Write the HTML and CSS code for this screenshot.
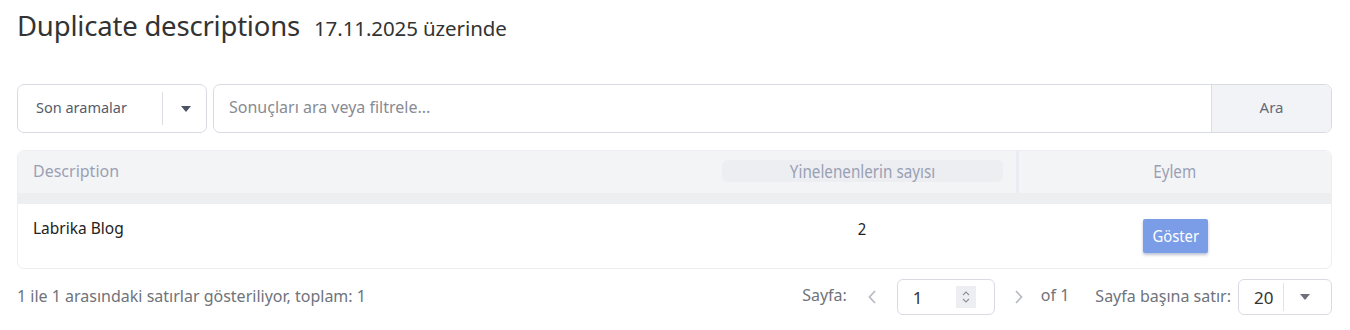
FILE: index.html
```html
<!DOCTYPE html>
<html lang="tr">
<head>
<meta charset="utf-8">
<link rel="stylesheet" href="styles.css">
</head>
<body>
<div class="page">
  <div class="title-row">
    <h1 class="title">Duplicate descriptions</h1>
    <span class="date">17.11.2025 üzerinde</span>
  </div>

  <div class="search-row">
    <div class="recent">
      <span class="recent-label">Son aramalar</span>
      <span class="recent-sep"></span>
      <span class="caret"></span>
    </div>
    <div class="search-box">
      <span class="search-input">Sonuçları ara veya filtrele...</span>
      <span class="search-btn">Ara</span>
    </div>
  </div>

  <div class="table">
    <div class="thead">
      <div class="th th-desc">Description</div>
      <div class="th th-count"><span class="pill"><span class="narrow">Yinelenenlerin sayısı</span></span></div>
      <div class="th th-action"><span class="narrow">Eylem</span></div>
    </div>
    <div class="thead-strip"></div>
    <div class="tr">
      <div class="td td-desc">Labrika Blog</div>
      <div class="td td-count"><span class="narrow">2</span></div>
      <div class="td td-action"><span class="btn-show"><span class="narrow">Göster</span></span></div>
    </div>
  </div>

  <div class="footer">
    <div class="info">1 ile 1 arasındaki satırlar gösteriliyor, toplam: 1</div>
    <div class="pager">
      <span class="pager-label">Sayfa:</span>
      <svg class="chev" width="10" height="16" viewBox="0 0 10 16"><path d="M8 2 L2.5 8 L8 14" fill="none" stroke="#b9bcc4" stroke-width="1.8"/></svg>
      <div class="page-input">
        <span class="page-num">1</span>
        <span class="spinner">
          <svg width="12" height="18" viewBox="0 0 12 18"><path d="M3 7 L6 4 L9 7 M3 11 L6 14 L9 11" fill="none" stroke="#8b909c" stroke-width="1.1"/></svg>
        </span>
      </div>
      <svg class="chev" width="10" height="16" viewBox="0 0 10 16"><path d="M2 2 L7.5 8 L2 14" fill="none" stroke="#b9bcc4" stroke-width="1.8"/></svg>
      <span class="of">of 1</span>
      <span class="per-label">Sayfa başına satır:</span>
      <div class="per-select">
        <span class="per-val">20</span>
        <span class="per-sep"></span>
        <span class="caret caret-gray"></span>
      </div>
    </div>
  </div>
</div>
</body>
</html>
```

FILE: styles.css
```css
* { box-sizing: border-box; }
html, body { margin: 0; padding: 0; background: #fff; }
body { font-family: "Noto Sans", "Open Sans", sans-serif; color: #333; }
.page { padding: 0 18px 0 17px; }

.title-row { display: flex; align-items: baseline; height: 56px; padding-top: 7px; }
.title { margin: 0; font-weight: 400; font-size: 27.5px; color: #333; letter-spacing: -0.2px; }
.date { margin-left: 14px; font-size: 20.5px; color: #333; letter-spacing: -0.1px; }

.search-row { display: flex; gap: 6px; margin-top: 28px; height: 49px; }
.recent { width: 190px; border: 1px solid #d9dbe3; border-radius: 7px; display: flex; align-items: center; padding-left: 18px; }
.recent-label { font-size: 14.5px; color: #555c6b; width: 126px; margin-top: -4px; }
.recent-sep { width: 1px; height: 33px; background: #dcdee4; }
.caret { width: 0; height: 0; border-left: 5px solid transparent; border-right: 5px solid transparent; border-top: 6px solid #4b5467; margin-left: 18px; }
.search-box { flex: 1; display: flex; border: 1px solid #d9dbe3; border-radius: 7px; overflow: hidden; }
.search-input { flex: 1; display: flex; align-items: center; padding-left: 15px; font-size: 16px; color: #888b93; margin-top: -3px; }
.search-btn { width: 120px; background: #f2f3f6; border-left: 1px solid #dcdde3; display: flex; align-items: center; justify-content: center; font-size: 15px; color: #646b78; padding-bottom: 4px; }

.table { margin-top: 17px; border: 1px solid #eceef2; border-radius: 7px; overflow: hidden; }
.thead { display: flex; height: 42px; background: #f3f4f6; }
.th { font-size: 16px; color: #9aa0b4; display: flex; align-items: center; padding-bottom: 3px; }
.th-desc { flex: 1; padding-left: 15px; }
.th-count { width: 300px; justify-content: flex-start; padding-left: 3px; padding-bottom: 0; border-right: 3px solid #e9edf3; }
.pill { width: 281px; height: 22px; background: #eceef2; border-radius: 6px; display: inline-flex; align-items: center; justify-content: center; margin-top: -2px; font-size: 17.5px; }
.th-action { width: 312px; justify-content: center; font-size: 17.5px; }
.thead-strip { height: 11px; background: #eceef0; }
.tr { display: flex; height: 64px; align-items: center; }
.td { font-size: 15.5px; color: #222; }
.td-desc { flex: 1; padding-left: 15px; margin-top: -16px; }
.td-count { width: 300px; text-align: center; margin-top: -16px; padding-right: 14px; font-size: 17px; }
.td-action { width: 312px; display: flex; justify-content: center; padding-left: 1px; }
.btn-show { width: 65px; height: 34px; background: #7b9de8; color: #fff; font-size: 17px; border-radius: 2px; box-shadow: 0 2px 3px rgba(60, 80, 130, 0.35); display: flex; align-items: center; justify-content: center; padding-bottom: 2px; }
.narrow { display: inline-block; transform: scaleX(0.87); white-space: nowrap; }

.footer { display: flex; justify-content: space-between; align-items: center; margin-top: 10px; height: 36px; }
.info { font-size: 16px; color: #6f737b; margin-top: -3px; }
.pager { display: flex; align-items: center; font-size: 16px; color: #6f737b; }
.pager-label { margin-right: 20px; margin-top: -5px; }
.chev { display: block; }
.page-input { width: 98px; height: 36px; border: 1px solid #d9dbe3; border-radius: 6px; margin: 0 19px 0 20px; display: flex; align-items: center; padding-left: 15px; }
.page-num { font-size: 17px; color: #333; flex: 1; }
.spinner { width: 20px; height: 22px; background: #eceef2; margin-right: 18px; display: flex; align-items: center; justify-content: center; }
.of { margin-left: 17px; margin-right: 26px; margin-top: -5px; }
.per-label { margin-top: -3px; }
.per-select { margin-left: 7px; width: 94px; height: 36px; border: 1px solid #d9dbe3; border-radius: 6px; display: flex; align-items: center; padding-left: 15px; }
.per-val { font-size: 17px; color: #333; width: 29px; }
.per-sep { width: 1px; height: 28px; background: #e2e3e8; }
.caret-gray { border-top-color: #6d7079; margin-left: 16px; }
```
